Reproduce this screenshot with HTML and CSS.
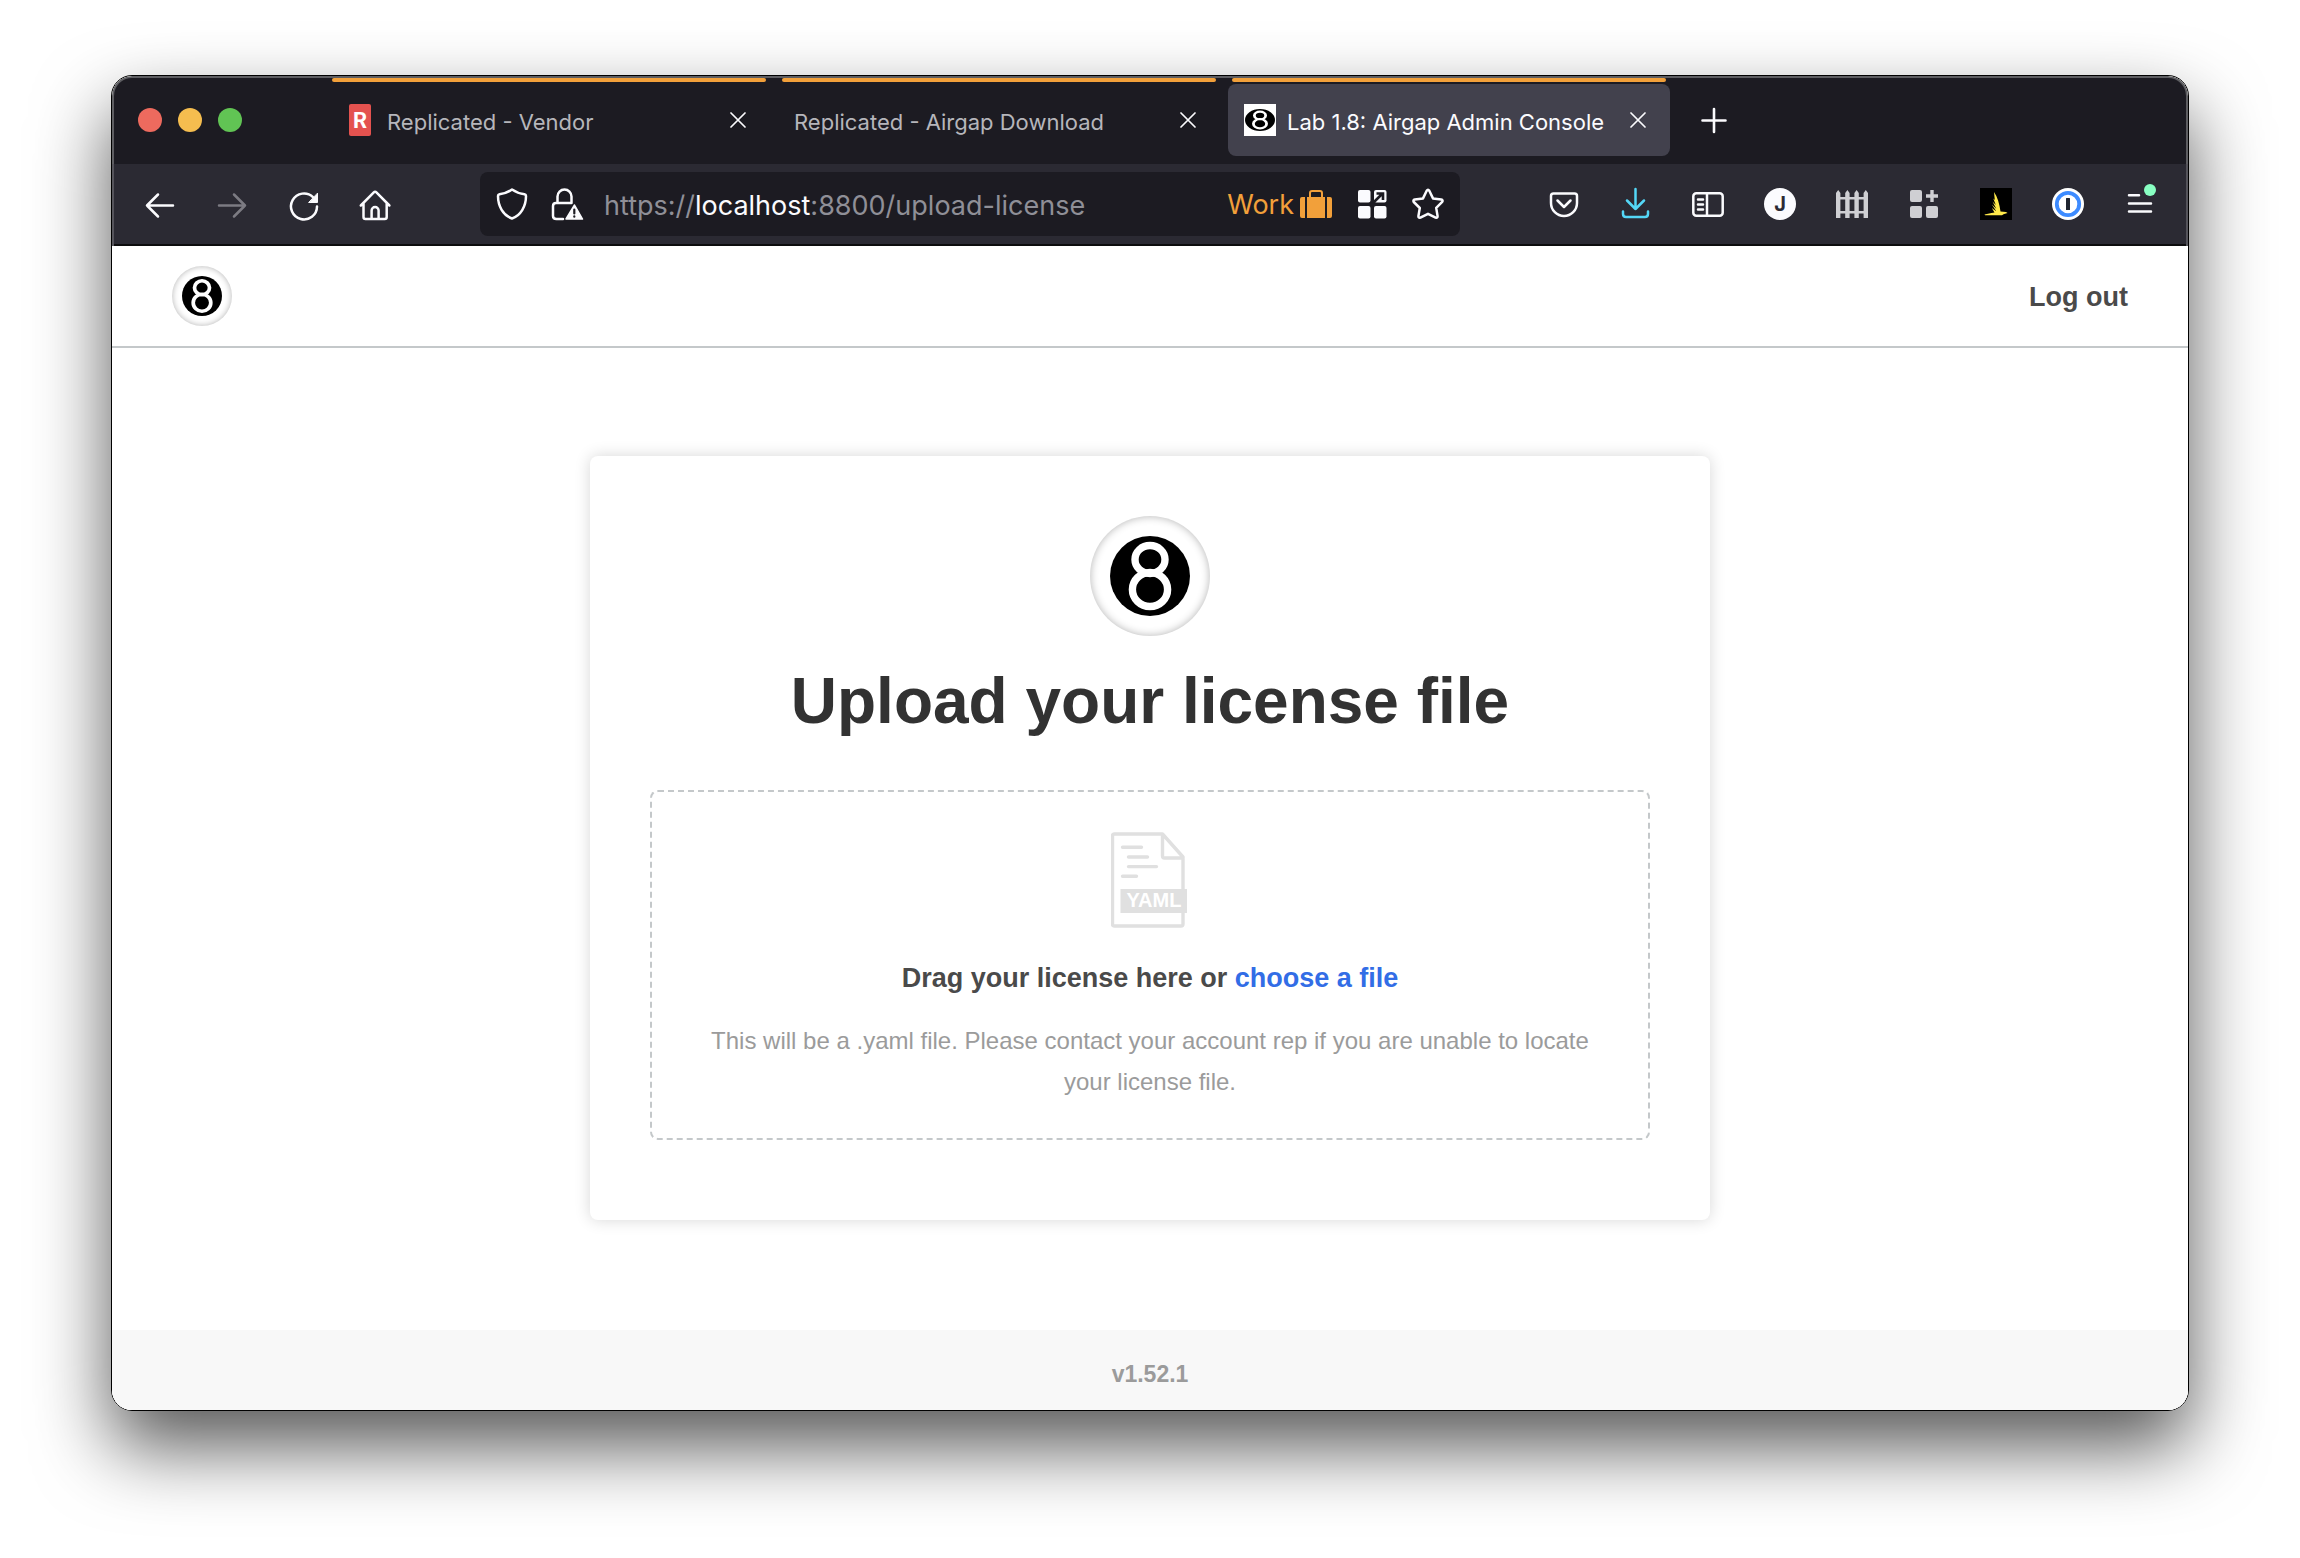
FILE: index.html
```html
<!DOCTYPE html>
<html lang="en">
<head>
<meta charset="utf-8">
<title>Lab 1.8: Airgap Admin Console</title>
<link rel="stylesheet" href="styles.css">
</head>
<body>
<svg class="defs" aria-hidden="true">
  <symbol id="ball" viewBox="0 0 80 80" preserveAspectRatio="none">
    <circle cx="40" cy="40" r="40"/>
    <g fill="none" stroke="#fff" stroke-width="7.4"><ellipse cx="40" cy="23.5" rx="15" ry="14"/><ellipse cx="40" cy="53.5" rx="17.6" ry="17"/></g>
  </symbol>
  <symbol id="close" viewBox="0 0 16 16"><path d="M1 1l14 14M15 1L1 15" fill="none" stroke="currentColor" stroke-width="1.700" stroke-linecap="round"/></symbol>
</svg>
<div class="window">
  <div class="tabbar">
    <div class="lights">
      <button class="light light-red" aria-label="Close window"></button>
      <button class="light light-yellow" aria-label="Minimize"></button>
      <button class="light light-green" aria-label="Zoom"></button>
    </div>
    <div class="tabs">
      <div class="tab">
        <button class="tab-main">
          <svg class="icon" viewBox="0 0 32 32"><rect x="5" width="22" height="32" rx="2" fill="#e4524f"/><text x="16" y="24" text-anchor="middle" class="r-mark">R</text></svg>
          <span class="tab-title">Replicated - Vendor</span>
        </button>
        <button class="tab-close" aria-label="Close tab"><svg><use href="#close"/></svg></button>
      </div>
      <div class="tab">
        <button class="tab-main"><span class="tab-title">Replicated - Airgap Download</span></button>
        <button class="tab-close" aria-label="Close tab"><svg><use href="#close"/></svg></button>
      </div>
      <div class="tab tab-active">
        <button class="tab-main">
          <svg class="icon" viewBox="0 0 32 32"><path fill="#fff" d="M0 0h32v32H0z"/><use href="#ball" x="1" y="5" width="30" height="22"/></svg>
          <span class="tab-title">Lab 1.8: Airgap Admin Console</span>
        </button>
        <button class="tab-close" aria-label="Close tab"><svg><use href="#close"/></svg></button>
      </div>
    </div>
    <button class="new-tab" aria-label="New tab"><svg class="icon" viewBox="0 0 32 32"><path d="M16 5v23M4.500 16.500h23" fill="none" stroke="currentColor" stroke-width="2.600" stroke-linecap="round"/></svg></button>
  </div>

  <div class="toolbar">
    <div class="nav">
      <button class="tool" aria-label="Back"><svg class="icon line" viewBox="0 0 32 32"><path d="M29 17.500H3M14 6.500L3 17.500l11 11"/></svg></button>
      <button class="tool dim" aria-label="Forward"><svg class="icon line" viewBox="0 0 32 32"><path d="M3 17.500h26M18 6.500l11 11-11 11"/></svg></button>
      <button class="tool" aria-label="Reload"><svg class="icon line" viewBox="0 0 32 32"><path d="M29 18.500a13 13 0 1 1-4-9.400"/><path d="M29.500 5.500v9h-8.500z" fill="currentColor" stroke-width="1"/></svg></button>
      <button class="tool" aria-label="Home"><svg class="icon line" viewBox="0 0 32 32"><path d="M.8 17.500L13.800 4.300q1.300-1.300 2.600 0L29.400 17.500M3.500 15V29q0 2 2 2h19.200q2 0 2-2V15M11.600 31V22.500a3.500 3.500 0 0 1 7 0v8.500"/></svg></button>
    </div>
    <div class="urlbar">
      <svg class="icon line" viewBox="0 0 32 32"><path d="M16 1.500c4 2.800 8.500 4.300 12.500 4.800 1 .2 1.500.8 1.500 1.800C30 18 25 27.500 16 30.500 7 27.500 2 18 2 8.100c0-1 .5-1.600 1.500-1.800C7.500 5.800 12 4.300 16 1.500z"/></svg>
      <svg class="icon line" viewBox="0 0 32 32"><path d="M5.500 15V8.500a7 7 0 0 1 14 0V15M11 31H4.500Q1 31 1 28V18q0-3 3-3h15"/><path d="M22.500 17L30.500 31H14z" fill="currentColor" stroke-linejoin="round" stroke-width="1.500"/><path d="M22.300 21.500v4M22.300 28.300v.4" stroke="#1c1b22" stroke-width="2.200"/></svg>
      <div class="address" role="textbox" aria-label="Address">https://<span class="host">localhost</span>:8800/upload-license</div>
      <span class="container-tag">Work<svg class="icon" viewBox="0 0 32 32"><path fill="currentColor" d="M0 11q0-2 2-2h3v21H2q-2 0-2-2zM32 11q0-2-2-2h-3v21h3q2 0 2-2zM7 9h18v21H7z"/><path d="M10 9V5q0-2 2-2h8q2 0 2 2v4" fill="none" stroke="currentColor" stroke-width="2"/></svg></span>
      <button class="tool" aria-label="Extensions"><svg class="icon" viewBox="0 0 32 32" fill="currentColor"><rect x="2" y="2" width="12.500" height="12.500" rx="2"/><rect x="2" y="18" width="12.500" height="12.500" rx="2"/><rect x="18" y="18" width="12.500" height="12.500" rx="2"/><rect x="18" y="2" width="12.500" height="12.500" rx="2"/><path d="M17.500 14.500l8.500-8.500M20.500 5.500h6.500v6.500" fill="none" stroke="#1c1b22" stroke-width="2.600"/></svg></button>
      <button class="tool" aria-label="Bookmark this page"><svg class="icon line" viewBox="0 0 32 32"><path d="M14.700 2.800q1.300-2 2.600 0l3.700 7.600 8.200 1.200q2.200.4 1 2.300l-6 6 1.400 8.200q.1 2.200-2 1.500L16 25.800l-7.600 3.800q-2.100.7-2-1.500L7.800 20l-6-6q-1.200-2 1-2.400l8.200-1.200z"/></svg></button>
    </div>
    <div class="extensions">
      <button class="tool" aria-label="Pocket"><svg class="icon line" viewBox="0 0 32 32"><path d="M5.500 5.500h21q2.500 0 2.500 2.500v7a13 13 0 0 1-26 0V8q0-2.500 2.500-2.500zM9.500 12.500L16 19l6.500-6.500"/></svg></button>
      <button class="tool download" aria-label="Downloads"><svg class="icon line" viewBox="0 0 32 32"><path d="M15.500 1v20M7 12.500l8.500 8.500 8.500-8.500M3 23.500v2.500q0 3 3 3h19q3 0 3-3v-2.500"/></svg></button>
      <button class="tool" aria-label="Sidebar"><svg class="icon line" viewBox="0 0 32 32"><rect x="1.300" y="5.300" width="29.400" height="22.400" rx="3"/><path d="M15 5.500v22M6 11.500h5M6 16.500h5M6 21.500h5"/></svg></button>
      <button class="tool" aria-label="Profile J"><svg class="icon" viewBox="0 0 32 32"><circle cx="16" cy="16" r="16" fill="#fbfbfe"/><text x="16" y="23" text-anchor="middle" class="j-mark">J</text></svg></button>
      <button class="tool soft" aria-label="Fence"><svg class="icon" viewBox="0 0 32 32" fill="currentColor"><path d="M0 5l2.200-3 2.200 3v25H0zM9.200 5l2.200-3 2.200 3v25H9.200zM18.400 5l2.200-3 2.200 3v25h-4.400zM27.600 5l2.200-3L32 5v25h-4.400zM0 9h32v2.500H0zM0 23h32v2.500H0z"/></svg></button>
      <button class="tool soft" aria-label="Containers"><svg class="icon" viewBox="0 0 32 32" fill="currentColor"><rect x="2" y="2" width="12" height="12" rx="2"/><rect x="2" y="18" width="12" height="12" rx="2"/><rect x="18" y="18" width="12" height="12" rx="2"/><path d="M22.300 2h3.400v4.300H30v3.400h-4.300V14h-3.400V9.700H18V6.300h4.300z"/></svg></button>
      <button class="tool" aria-label="Sail"><svg class="icon" viewBox="0 0 32 32"><path d="M0 0h32v32H0z"/><path fill="#ffe94a" d="M14 4c3.500 5 5.500 12 6.500 19.500l5.500.5 1.500 1-4 1.200L22 27.300H5l-.5-.8 7-1.500 3-.5-2.700-4.500 4.500 3.200-4.500-6.700 4.500 4.200-3.800-7.200 3.300 3.500-2.500-6.500 1.500 1.500z"/></svg></button>
      <button class="tool" aria-label="1Password"><svg class="icon" viewBox="0 0 32 32"><circle cx="16" cy="16" r="16" fill="#fff"/><circle cx="16" cy="16" r="11.200" fill="#fff" stroke="#3d8bff" stroke-width="3.800"/><rect x="14" y="10" width="4" height="12" rx=".5" fill="#1f2430"/></svg></button>
      <button class="tool" aria-label="Menu"><svg class="icon line menu" viewBox="0 0 32 32"><path d="M5 7.300h10M5 15.500h22M5 23.500h22"/><circle cx="26" cy="2" r="6" fill="#88ffc2" stroke="none"/></svg></button>
    </div>
  </div>

  <div class="page">
    <header class="header">
      <a class="logo logo-small" href="#" aria-label="Home"><svg><use href="#ball"/></svg></a>
      <button class="logout">Log out</button>
    </header>
    <main class="main">
      <section class="card">
        <div class="logo logo-large"><svg><use href="#ball"/></svg></div>
        <h1>Upload your license file</h1>
        <div class="dropzone">
          <svg class="yaml" viewBox="0 0 78 96"><g fill="none" stroke="#e0e0e0" stroke-width="3.400" stroke-linecap="round" stroke-linejoin="round"><path d="M72 25v67q0 2-2 2H3.500q-2 0-2-2V4q0-2 2-2h48zM51.500 2v22q0 2 2 2H72"/><path d="M11.500 15.200h19M17.500 25h19M17.500 34.600h28M11.500 44.300h14"/></g><path fill="#e0e0e0" d="M9.500 57H76v24H9.500z"/><text x="43" y="75" text-anchor="middle" class="yaml-text">YAML</text></svg>
          <p class="prompt">Drag your license here or <label for="license" class="choose">choose a file</label></p>
          <input type="file" id="license" class="file-input" accept=".yaml">
          <p class="hint">This will be a .yaml file. Please contact your account rep if you are unable to locate your license file.</p>
        </div>
      </section>
    </main>
    <footer class="footer">v1.52.1</footer>
  </div>
</div>
</body>
</html>
```
FILE: styles.css
```css
* { box-sizing: border-box; }

body {
  margin: 0;
  padding: 75px 111px 147px;
  background: #fff;
  font-family: "Liberation Sans", Arial, sans-serif;
}

button {
  padding: 0;
  border: 0;
  background: none;
  color: inherit;
  font: inherit;
  cursor: pointer;
}

svg { display: block; }
.defs { position: absolute; width: 0; height: 0; }
.icon { width: 32px; height: 32px; flex: none; overflow: visible; }
.line { fill: none; stroke: currentColor; stroke-width: 2.5px; stroke-linecap: round; stroke-linejoin: round; }

.window {
  display: flex;
  flex-direction: column;
  min-height: calc(100vh - 222px);
  border: 1px solid #000;
  border-radius: 21px;
  overflow: hidden;
  box-shadow: 0 36px 76px rgba(0, 0, 0, .66);
}

/* Tab strip */
.tabbar {
  display: flex;
  align-items: flex-start;
  height: 88px;
  background: #1c1b22;
  border: 2px solid #5e5e62;
  border-bottom: 0;
  border-radius: 20px 20px 0 0;
  color: #fbfbfe;
  font-family: Inter, sans-serif;
  font-size: 22px;
}
.lights { display: flex; gap: 16px; padding: 30px 86px 0 24px; }
.light { width: 24px; height: 24px; border-radius: 50%; }
.light-red { background: #ed6a5e; }
.light-yellow { background: #f5bd4f; }
.light-green { background: #61c454; }

.tabs { display: flex; gap: 8px; }
.tab {
  position: relative;
  display: flex;
  align-items: center;
  justify-content: space-between;
  width: 442px;
  height: 72px;
  margin-top: 6px;
  padding: 0 24px 0 16px;
  border-radius: 8px;
  color: #b6b6bb;
}
.tab::before {
  content: "";
  position: absolute;
  inset: -6px 4px auto;
  height: 4px;
  border-radius: 2px;
  background: #f2a03a;
}
.tab-active { background: #42414d; color: #fbfbfe; }
.tab-main { display: flex; align-items: center; gap: 11px; white-space: nowrap; }
.tab-title { padding-top: 3px; }
.tab-close { color: #fbfbfe; }
.tab-close svg { width: 16px; height: 16px; }
.new-tab { margin: 26px 0 0 28px; }

/* Navigation bar */
.toolbar {
  display: flex;
  align-items: center;
  justify-content: space-between;
  height: 82px;
  padding: 0 30px 2px;
  background: #2b2a33;
  border: solid #55545b;
  border-width: 0 2px;
  color: #fbfbfe;
  font-family: Inter, sans-serif;
  box-shadow: inset 0 -2px #0c0c0d;
}
.nav, .extensions { display: flex; gap: 40px; }
.dim { color: #7c7b83; }
.soft { color: #cfcfd3; }
.download { color: #54d7f7; }

.urlbar {
  display: flex;
  align-items: center;
  flex: 0 1 980px;
  height: 64px;
  padding: 0 16px;
  gap: 24px;
  background: #1c1b22;
  border-radius: 8px;
  font-size: 27px;
}
.address { flex: 1; margin-left: -4px; padding-top: 2px; color: #8f8f97; white-space: nowrap; }
.host { color: #fbfbfe; }
.container-tag { display: flex; align-items: center; gap: 6px; color: #f2a03a; }

.r-mark, .j-mark { font-family: Roboto, sans-serif; font-weight: 700; }
.r-mark { fill: #fff; font-size: 22px; }
.j-mark { fill: #2b2a33; font-family: Inter, sans-serif; font-size: 20px; }

/* Page */
.page { display: flex; flex-direction: column; flex: 1; background: #fff; }
.header {
  display: flex;
  align-items: center;
  justify-content: space-between;
  height: 102px;
  padding: 0 60px;
  border-bottom: 2px solid #c4c8ca;
}
.logout { padding-top: 3px; color: #4a4a4a; font-size: 27px; font-weight: 700; }

.logo {
  display: flex;
  align-items: center;
  justify-content: center;
  border-radius: 50%;
}
.logo-small { width: 60px; height: 60px; box-shadow: inset 0 0 6px rgba(0, 0, 0, .3); }
.logo-small svg { width: 40px; height: 40px; }
.logo-large { width: 120px; height: 120px; box-shadow: inset 0 0 8px rgba(0, 0, 0, .3); }
.logo-large svg { width: 80px; height: 80px; }

.main { flex: 1; padding: 108px 24px; }
.card {
  display: flex;
  flex-direction: column;
  align-items: center;
  max-width: 1120px;
  margin: 0 auto;
  padding: 60px 60px 80px;
  border-radius: 8px;
  box-shadow: 0 0 16px rgba(0, 0, 0, .16);
}
h1 {
  margin: 27px 0 51px;
  color: #323232;
  font-size: 64px;
  line-height: 76px;
}
.dropzone {
  display: flex;
  flex-direction: column;
  align-items: center;
  align-self: stretch;
  padding: 40px 40px 36px;
  border: 2px dashed #c4c8ca;
  border-radius: 8px;
  text-align: center;
}
.yaml { width: 78px; height: 96px; }
.yaml-text { fill: #fff; font-size: 20px; font-weight: 700; }
.prompt { margin: 32px 0 24px; color: #4a4a4a; font-size: 27px; font-weight: 700; line-height: 36px; }
.choose { color: #326de6; cursor: pointer; }
.file-input { position: absolute; width: 1px; height: 1px; opacity: 0; }
.hint { margin: 0; color: #9b9b9b; font-size: 24px; line-height: 41px; }
.footer {
  height: 80px;
  background: #f8f8f8;
  color: #9b9b9b;
  font-size: 23px;
  font-weight: 700;
  line-height: 88px;
  text-align: center;
}
```
